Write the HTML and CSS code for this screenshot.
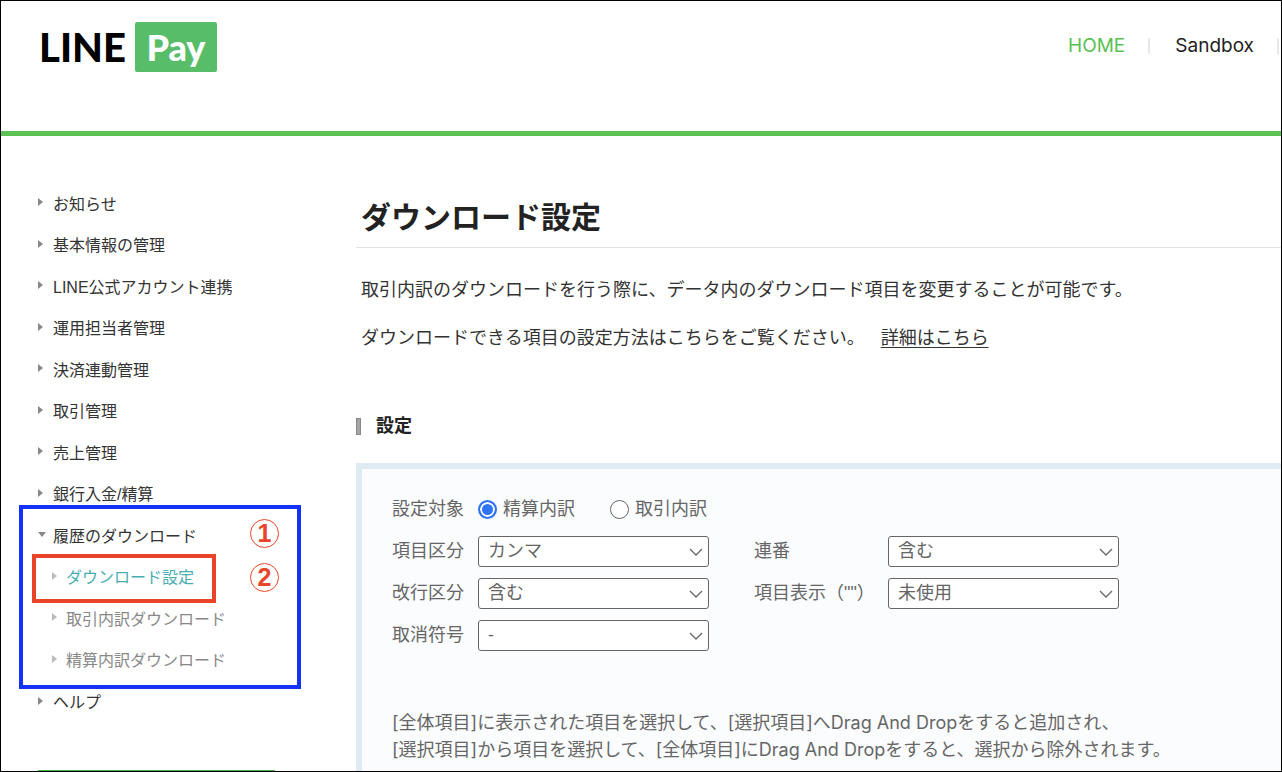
FILE: index.html
```html
<!DOCTYPE html>
<html lang="ja">
<head>
<meta charset="utf-8">
<title>ダウンロード設定 - LINE Pay</title>
<link rel="stylesheet" href="styles.css">
</head>
<body>
<header class="header">
  <a class="logo" href="#"><span class="logo-line">LINE</span><span class="logo-pay">Pay</span></a>
  <nav class="topnav">
    <a class="topnav-link current" href="#">HOME</a>
    <a class="topnav-link" href="#">Sandbox</a>
  </nav>
</header>
<div class="layout">
  <aside class="sidebar">
    <ul class="menu">
      <li><a class="menu-link" href="#">お知らせ</a></li>
      <li><a class="menu-link" href="#">基本情報の管理</a></li>
      <li><a class="menu-link" href="#">LINE公式アカウント連携</a></li>
      <li><a class="menu-link" href="#">運用担当者管理</a></li>
      <li><a class="menu-link" href="#">決済連動管理</a></li>
      <li><a class="menu-link" href="#">取引管理</a></li>
      <li><a class="menu-link" href="#">売上管理</a></li>
      <li><a class="menu-link" href="#">銀行入金/精算</a></li>
      <li class="group">
        <a class="menu-link open" href="#">履歴のダウンロード</a>
        <ul class="submenu">
          <li><a class="menu-link active" href="#">ダウンロード設定</a></li>
          <li><a class="menu-link" href="#">取引内訳ダウンロード</a></li>
          <li><a class="menu-link" href="#">精算内訳ダウンロード</a></li>
        </ul>
        <span class="mark mark-group"></span>
        <span class="mark mark-item"></span>
        <span class="step step-one">1</span>
        <span class="step step-two">2</span>
      </li>
      <li><a class="menu-link" href="#">ヘルプ</a></li>
    </ul>
    <div class="side-card"></div>
  </aside>
  <main class="main">
    <h1 class="title">ダウンロード設定</h1>
    <p class="lead">取引内訳のダウンロードを行う際に、データ内のダウンロード項目を変更することが可能です。</p>
    <p class="lead">ダウンロードできる項目の設定方法はこちらをご覧ください。<a class="detail" href="#">詳細はこちら</a></p>
    <h2 class="section">設定</h2>
    <form class="panel">
      <div class="fields">
        <span class="label" id="target">設定対象</span>
        <div class="radios" role="radiogroup" aria-labelledby="target">
          <label class="radio"><input type="radio" name="target" checked>精算内訳</label>
          <label class="radio"><input type="radio" name="target">取引内訳</label>
        </div>
        <label class="label first" for="item">項目区分</label>
        <div class="pick"><select id="item"><option>カンマ</option></select><svg viewBox="0 0 14 8"><path d="M1 1l6 6 6-6"/></svg></div>
        <label class="label second" for="serial">連番</label>
        <div class="pick"><select id="serial"><option>含む</option></select><svg viewBox="0 0 14 8"><path d="M1 1l6 6 6-6"/></svg></div>
        <label class="label first" for="newline">改行区分</label>
        <div class="pick"><select id="newline"><option>含む</option></select><svg viewBox="0 0 14 8"><path d="M1 1l6 6 6-6"/></svg></div>
        <label class="label second" for="quote">項目表示（""）</label>
        <div class="pick"><select id="quote"><option>未使用</option></select><svg viewBox="0 0 14 8"><path d="M1 1l6 6 6-6"/></svg></div>
        <label class="label first" for="sign">取消符号</label>
        <div class="pick"><select id="sign"><option>-</option></select><svg viewBox="0 0 14 8"><path d="M1 1l6 6 6-6"/></svg></div>
      </div>
      <p class="help">[全体項目]に表示された項目を選択して、[選択項目]へDrag And Dropをすると追加され、<br>[選択項目]から項目を選択して、[全体項目]にDrag And Dropをすると、選択から除外されます。</p>
    </form>
  </main>
</div>
</body>
</html>
```
FILE: styles.css
```css
*, *::before, *::after { box-sizing: border-box; }

body {
  margin: 0;
  height: 100vh;
  overflow: hidden;
  border: 1px solid #000;
  background: #fff;
  color: #333;
  font-family: "Liberation Sans", "Noto Sans CJK JP", sans-serif;
  font-size: 18px;
}

a { color: inherit; text-decoration: none; }
ul { list-style: none; margin: 0; padding: 0; }

.header {
  display: flex;
  justify-content: space-between;
  align-items: flex-start;
  height: 135px;
  padding: 21px 0 0 38px;
  border-bottom: 5px solid #5ac152;
}

.logo {
  display: flex;
  align-items: center;
  gap: 9px;
  font-family: Lato, sans-serif;
  font-weight: 900;
}
.logo-line { color: #000; font-size: 40px; line-height: 50px; }
.logo-pay {
  width: 82px;
  border-radius: 2px;
  background: #58bd68;
  color: #fff;
  font-size: 36px;
  line-height: 50px;
  text-align: center;
}

.topnav { display: flex; padding: 12px 2px 0 0; font-family: Inter, sans-serif; font-size: 19px; color: #222; }
.topnav-link {
  display: flex;
  align-items: center;
  line-height: 24px;
}
.topnav-link::after {
  content: "";
  width: 2px;
  height: 16px;
  margin-left: 23px;
  background: #e8e8e8;
}
.topnav-link + .topnav-link { margin-left: 25px; }
.topnav-link.current { color: #5ac152; }

.layout { display: flex; }
.sidebar { flex: none; width: 355px; padding: 46px 81px 0 37px; font-size: 16px; }

.menu-link {
  display: flex;
  align-items: center;
  height: 41px;
}
.menu > li:nth-child(even) > .menu-link,
.submenu > li:nth-child(odd) > .menu-link { height: 42px; }
.menu-link::before {
  content: "";
  margin: 0 10px 1px 0;
  border: 4px solid transparent;
  border-left: 5px solid #888;
  border-right: 0;
}
.menu-link.open::before {
  margin-right: 7px;
  border: 4px solid transparent;
  border-top: 5px solid #888;
  border-bottom: 0;
}
.submenu { padding-left: 14px; color: #888; }
.submenu .menu-link::before { margin-right: 9px; border-left-color: #bbb; }
.menu-link.active { color: #48aeb0; }

.group { position: relative; }
.mark { position: absolute; pointer-events: none; }
.mark-group { left: -19px; top: -9px; width: 282px; height: 184px; border: 4px solid #1432f5; }
.mark-item { left: -6px; top: 40px; width: 184px; height: 49px; border: 4px solid #e9442a; }
.step {
  position: absolute;
  left: 212px;
  width: 29px;
  height: 29px;
  border: 1px solid #e9442a;
  border-radius: 50%;
  color: #e9442a;
  font-size: 25px;
  font-weight: 700;
  line-height: 27px;
  text-align: center;
}
.step-one { top: 5px; }
.step-two { top: 49px; }

.side-card { height: 80px; margin-top: 48px; border-top: 4px solid #45b554; }

.main { flex: 1; min-width: 0; padding-top: 61px; white-space: nowrap; }
.title {
  margin: 0;
  padding: 0 0 8px 5px;
  border-bottom: 1px solid #e2e2e2;
  color: #222;
  font-size: 30px;
  line-height: 42px;
}
.lead { margin: 0 0 21px; padding-left: 5px; line-height: 27px; }
.title + .lead { margin-top: 29px; }
.detail { margin-left: 16px; text-decoration: underline; text-underline-offset: 3px; }

.section {
  display: flex;
  align-items: center;
  gap: 15px;
  margin: 61px 0 23px;
  color: #222;
  font-size: 18px;
  line-height: 27px;
}
.section::before { content: ""; width: 5px; height: 17px; border: 1px solid #888; background: #a5a5a5; }

.panel {
  min-height: 400px;
  padding: 24px 30px;
  border: solid #dfebf3;
  border-width: 6px 0 0 6px;
  background: #fbfcfe;
  color: #666;
}
.fields {
  display: grid;
  grid-template-columns: 86px 231px 179px 231px;
  row-gap: 10px;
  align-items: center;
}
.label { line-height: 32px; }
.label.first { grid-column: 1; }
.label.second { padding-left: 45px; }

.radios { grid-column: 2 / -1; display: flex; gap: 35px; }
.radio { display: flex; align-items: center; gap: 6px; line-height: 32px; }
.radio input {
  appearance: none;
  width: 19px;
  height: 19px;
  margin: 0;
  border: 1px solid #666;
  border-radius: 50%;
  background: #fff;
}
.radio input:checked { border: 2px solid #2f73f6; background: #2f73f6; box-shadow: inset 0 0 0 2px #fff; }

.pick { position: relative; }
.pick select {
  display: block;
  appearance: none;
  width: 100%;
  height: 31px;
  padding: 0 30px 0 9px;
  border: 1px solid #666;
  border-radius: 3px;
  background: #fff;
  color: #666;
  font: inherit;
}
.pick svg {
  position: absolute;
  right: 6px;
  top: 12px;
  width: 14px;
  height: 8px;
  fill: none;
  stroke: #666;
  stroke-width: 1.3;
  pointer-events: none;
}
.help { margin: 58px 0 0; font-family: Inter, "Noto Sans CJK JP", sans-serif; line-height: 27px; }
```
